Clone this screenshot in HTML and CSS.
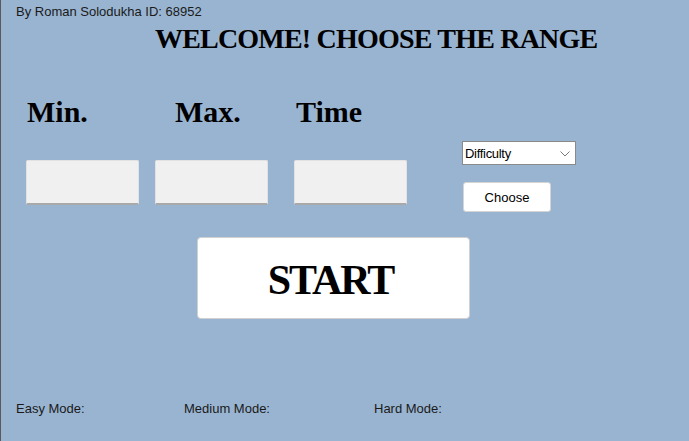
FILE: index.html
```html
<!DOCTYPE html>
<html>
<head>
<meta charset="utf-8">
<link rel="stylesheet" href="styles.css">
</head>
<body>
<div class="app">
  <div class="byline">By Roman Solodukha ID: 68952</div>
  <h1 class="title">WELCOME! CHOOSE THE RANGE</h1>
  <div class="labels">
    <span class="lbl lbl-min">Min.</span>
    <span class="lbl lbl-max">Max.</span>
    <span class="lbl">Time</span>
  </div>
  <div class="controls">
    <div class="boxes">
      <div class="box"></div>
      <div class="box"></div>
      <div class="box box-time"></div>
    </div>
    <div class="aside">
      <div class="select">
        <span>Difficulty</span>
        <svg class="chev" width="10" height="6" viewBox="0 0 10 6"><polyline points="0.5,0.5 5,5 9.5,0.5" fill="none" stroke="#7a7a7a" stroke-width="1"/></svg>
      </div>
      <div class="choose">Choose</div>
    </div>
  </div>
  <div class="start">START</div>
  <div class="modes">
    <span class="mode mode-easy">Easy Mode:</span>
    <span class="mode mode-medium">Medium Mode:</span>
    <span class="mode">Hard Mode:</span>
  </div>
</div>
</body>
</html>
```
FILE: styles.css
```css
* { box-sizing: border-box; }
html, body {
  margin: 0;
  padding: 0;
  width: 689px;
  height: 441px;
  overflow: hidden;
  background: #99b4d1;
}
body {
  border-left: 1px solid #5a5a5a;
  font-family: "Liberation Sans", Arial, sans-serif;
  color: #1a1a1a;
}
.app {
  padding-left: 15px;
}
.byline {
  padding-top: 4px;
  font-size: 13px;
  line-height: 15px;
}
.title {
  margin: 6px 0 0 139px;
  font-family: "Liberation Serif", "Times New Roman", serif;
  font-weight: bold;
  font-size: 28px;
  line-height: 28px;
  letter-spacing: -0.8px;
  color: #000;
  white-space: nowrap;
}
.labels {
  margin-top: 44px;
  display: flex;
  padding-left: 11px;
  height: 30px;
  font-family: "Liberation Serif", "Times New Roman", serif;
  font-weight: bold;
  font-size: 30px;
  line-height: 30px;
  color: #000;
}
.lbl-min { width: 148px; }
.lbl-max { width: 121px; }
.controls {
  margin-top: 14px;
  display: flex;
  align-items: flex-start;
  padding-left: 10px;
}
.boxes {
  display: flex;
  margin-top: 19px;
}
.box {
  width: 113px;
  height: 45px;
  background: #f0f0f0;
  border: 1px solid #e2e2e2;
  border-bottom: 2px solid #a9a9a9;
  border-radius: 2px;
  margin-right: 16px;
}
.box-time {
  margin-left: 10px;
  margin-right: 0;
}
.aside {
  margin-left: 55px;
  display: flex;
  flex-direction: column;
}
.select {
  width: 114px;
  height: 24px;
  background: #fff;
  border: 1px solid #8a8a8a;
  display: flex;
  align-items: center;
  justify-content: space-between;
  padding: 0 5px 0 2px;
  font-size: 13px;
  letter-spacing: -0.3px;
  color: #000;
}
.chev { margin-top: 1px; }
.choose {
  margin: 17px 0 0 1px;
  width: 88px;
  height: 30px;
  background: #fff;
  border: 1px solid #d4d4d4;
  border-radius: 3px;
  display: flex;
  align-items: center;
  justify-content: center;
  font-size: 13px;
  color: #000;
}
.start {
  margin: 25px 0 0 181px;
  width: 273px;
  height: 82px;
  background: #fff;
  border: 1px solid #d0d0d0;
  border-radius: 4px;
  display: flex;
  align-items: center;
  justify-content: center;
  font-family: "Liberation Serif", "Times New Roman", serif;
  font-weight: bold;
  font-size: 42px;
  letter-spacing: -2px;
  color: #000;
  padding: 3px 6px 0 0;
}
.modes {
  margin-top: 82px;
  display: flex;
  font-size: 13px;
  line-height: 15px;
}
.mode-easy { width: 168px; }
.mode-medium { width: 190px; }
```
